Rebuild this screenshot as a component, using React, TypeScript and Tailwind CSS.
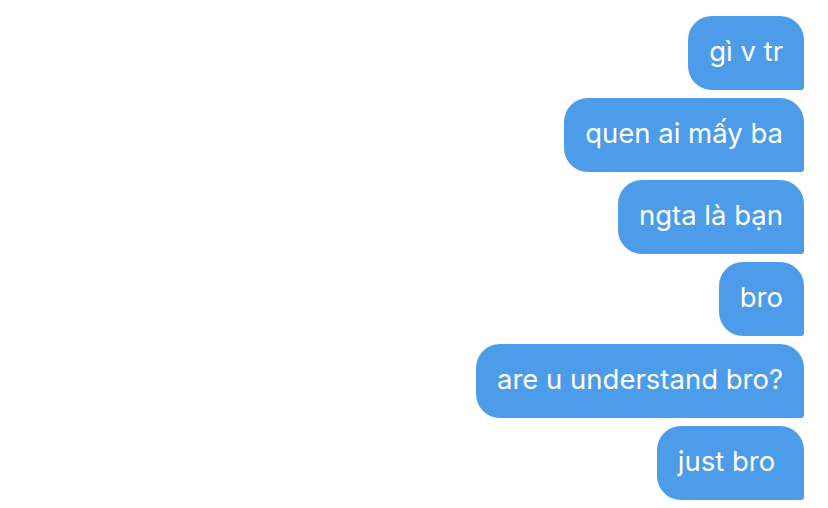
const messages = [
  "gì v tr",
  "quen ai mấy ba",
  "ngta là bạn",
  "bro",
  "are u understand bro?",
  "just bro ",
];

export default function App() {
  return (
    <div className="w-[828px] h-[508px] bg-white overflow-hidden">
      <div className="flex flex-col items-end gap-2 pt-4 pr-6">
        {messages.map((text, i) => (
          <div
            key={i}
            className="bg-[#4c9ce9] text-white whitespace-pre px-[21px] pt-[18px] pb-[22px] text-[27.5px] leading-[34px] rounded-[24px] rounded-br-[3px] font-['Inter',sans-serif]"
          >
            {text}
          </div>
        ))}
      </div>
    </div>
  );
}
